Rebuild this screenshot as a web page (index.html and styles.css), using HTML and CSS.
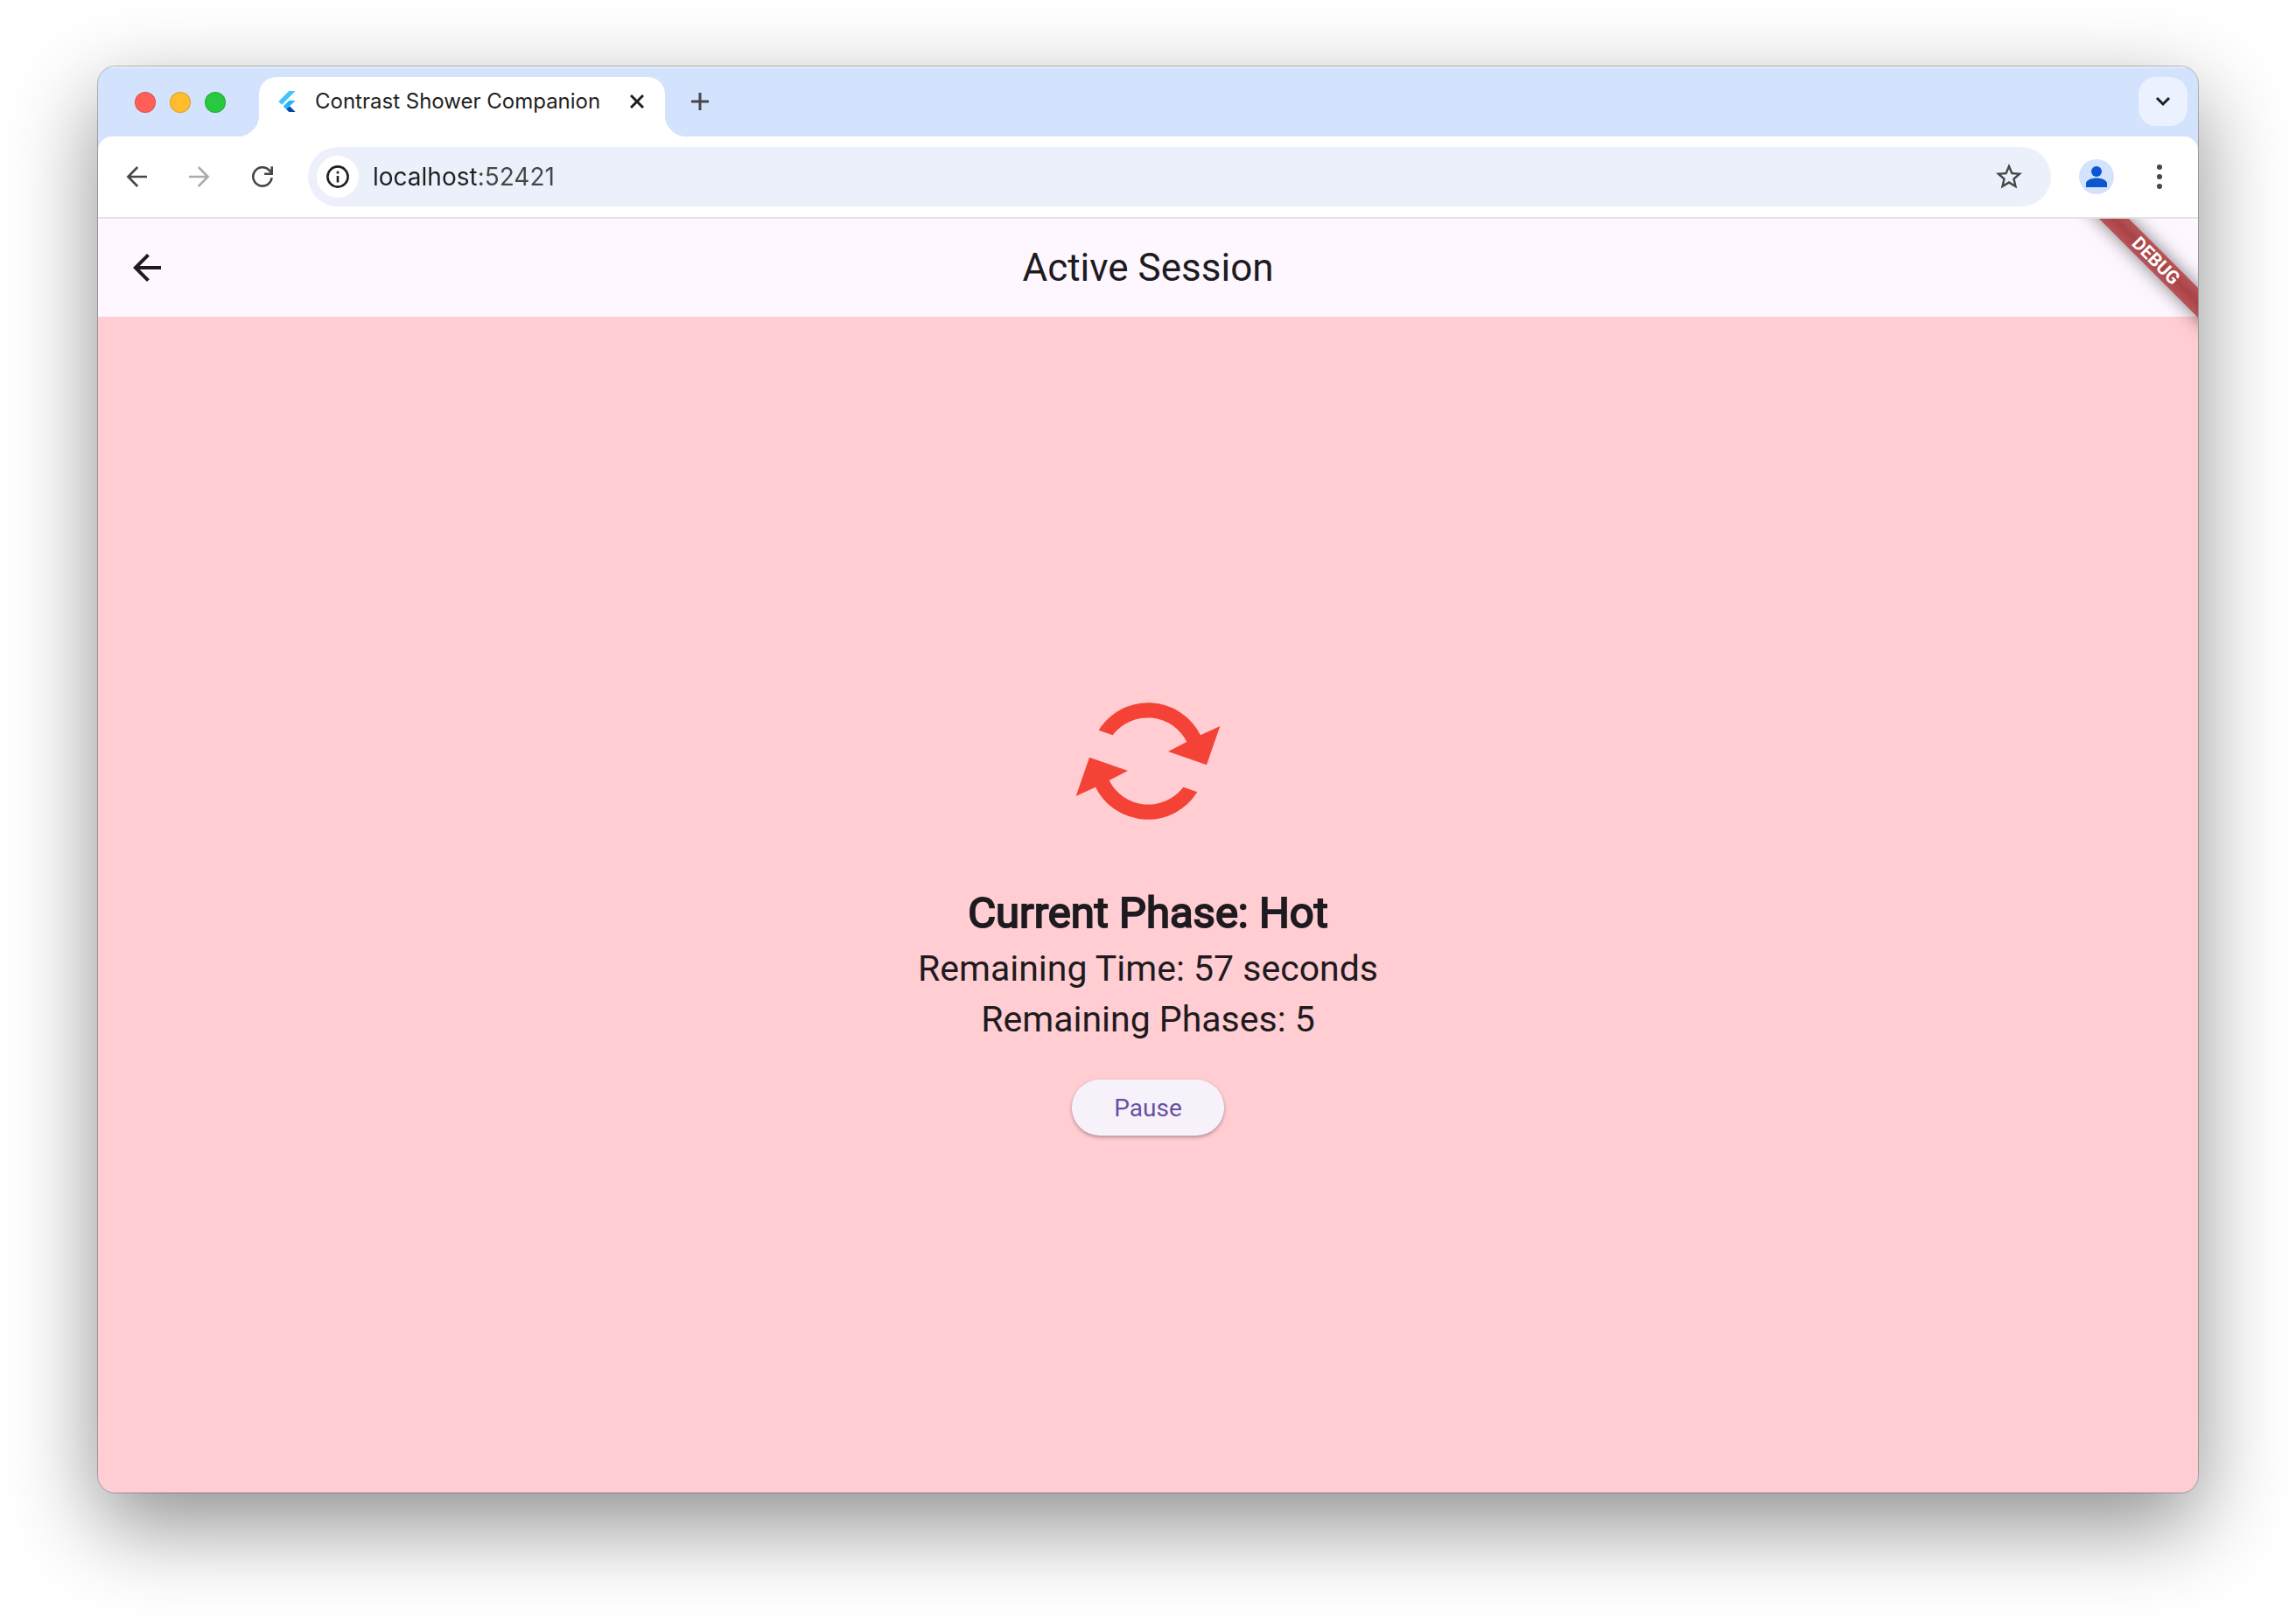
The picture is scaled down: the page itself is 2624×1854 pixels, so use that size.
FILE: index.html
```html
<!DOCTYPE html>
<html lang="en">
<head>
  <meta charset="utf-8">
  <meta name="viewport" content="width=device-width, initial-scale=1">
  <title>Contrast Shower Companion</title>
  <link rel="stylesheet" href="styles.css">
</head>
<body>
  <div class="window">
    <header class="tab-strip">
      <div class="lights">
        <button class="light light-close" aria-label="Close window"></button>
        <button class="light light-minimize" aria-label="Minimize window"></button>
        <button class="light light-zoom" aria-label="Zoom window"></button>
      </div>
      <span class="flare flare-left"></span>
      <div class="tab">
        <svg class="favicon" viewBox="0 0 24 24" aria-hidden="true">
          <path fill="#42c3fb" d="M14.3 0 2.3 12 6 15.7 21.7 0z"/>
          <path fill="#1fb4fa" d="M14.3 11.1 7.9 17.5l3.3 3.3 10.5-9.7z"/>
          <path fill="#0d47a1" d="m11.1 20.8 3.2 3.2h7.4l-6.5-6.5z"/>
          <path fill="#29b6f6" d="m7.9 17.5 3.6-3.6 3.7 3.6-4 3.3z"/>
        </svg>
        <span class="tab-title">Contrast Shower Companion</span>
        <button class="tab-close" aria-label="Close tab">
          <svg width="16" height="16" viewBox="0 0 16 16" fill="none" stroke="#1f1f1f" stroke-width="3"><path d="m1 1 14 14M15 1 1 15"/></svg>
        </button>
      </div>
      <span class="flare flare-right"></span>
      <button class="new-tab" aria-label="New tab">
        <svg width="20" height="20" viewBox="0 0 20 20" fill="none" stroke="#474747" stroke-width="3"><path d="M10 0v20M0 10h20"/></svg>
      </button>
      <button class="tab-search" aria-label="Search tabs">
        <svg width="18" height="12" viewBox="0 0 18 12" fill="none" stroke="#1f1f1f" stroke-width="3"><path d="m2 2 7 7 7-7"/></svg>
      </button>
    </header>

    <nav class="toolbar" aria-label="Browser">
      <button class="tool" aria-label="Back">
        <svg width="24" height="24" viewBox="0 0 24 24" fill="none" stroke="#474747" stroke-width="2.6"><path d="M24 12H3M13.2 1 2.4 12l10.8 11"/></svg>
      </button>
      <button class="tool" aria-label="Forward" disabled>
        <svg width="24" height="24" viewBox="0 0 24 24" fill="none" stroke="#ababab" stroke-width="2.6"><path d="M0 12h21M10.8 1l10.8 11-10.8 11"/></svg>
      </button>
      <button class="tool" aria-label="Reload">
        <svg width="24" height="24" viewBox="0 0 24 24" fill="none" stroke="#474747" stroke-width="2.6"><path d="M22.6 13.2A10.7 10.7 0 1 1 19.8 4.6L22.6 8M22.7.3v8.4h-8.6"/></svg>
      </button>
      <div class="omnibox">
        <button class="site-info" aria-label="View site information">
          <svg width="26" height="26" viewBox="0 0 26 26" fill="none" stroke="#1f1f1f" stroke-width="2.6"><circle cx="13" cy="13" r="11.6"/><path d="M13 12v7.4M13 6.8v2.8"/></svg>
        </button>
        <input class="address" type="text" value="localhost:52421" aria-label="Address">
        <button class="bookmark" aria-label="Bookmark this tab">
          <svg width="36" height="36" viewBox="0 0 24 24" fill="#474747"><path d="m22 9.24-7.19-.62L12 2 9.19 8.63 2 9.24l5.46 4.73L5.82 21 12 17.27 18.18 21l-1.63-7.03zM12 15.4l-3.76 2.27 1-4.28-3.32-2.88 4.38-.38L12 6.1l1.71 4.04 4.38.38-3.32 2.88 1 4.28z"/></svg>
        </button>
      </div>
      <button class="tool" aria-label="Profile">
        <svg width="40" height="40" viewBox="0 0 40 40"><circle cx="20" cy="20" r="20" fill="#d3e3fd"/><g fill="#0b57d0"><circle cx="20" cy="14" r="6"/><path d="M20 21.4c-5 0-12 2-12 6.2V32h24v-4.400c0-4.200-7-6.200-12-6.200z"/></g></svg>
      </button>
      <button class="tool" aria-label="Menu">
        <svg width="6" height="28" viewBox="0 0 6 28" fill="#474747"><circle cx="3" cy="3" r="3"/><circle cx="3" cy="14" r="3"/><circle cx="3" cy="25" r="3"/></svg>
      </button>
    </nav>

    <div class="app">
      <header class="app-bar">
        <button class="app-back" aria-label="Back">
          <svg width="48" height="48" viewBox="0 0 24 24" fill="#1d1b20"><path d="M20 11H7.830l5.590-5.590L12 4l-8 8 8 8 1.410-1.410L7.830 13H20z"/></svg>
        </button>
        <h1 class="app-title">Active Session</h1>
      </header>
      <main class="session">
        <svg class="phase-icon" viewBox="36 -30 600 600" fill="#f44336" aria-hidden="true">
          <path d="M167 164A200 200 0 0 1 516 181L583 150 537 283 405 237 469 204A150 150 0 0 0 215 181z"/>
          <path transform="rotate(180 336 270)" d="M167 164A200 200 0 0 1 516 181L583 150 537 283 405 237 469 204A150 150 0 0 0 215 181z"/>
        </svg>
        <h2 class="phase">Current Phase: Hot</h2>
        <p class="detail">Remaining Time: 57 seconds</p>
        <p class="detail">Remaining Phases: 5</p>
        <button class="pause">Pause</button>
      </main>
      <div class="banner">DEBUG</div>
    </div>
  </div>
</body>
</html>
```

FILE: styles.css
```css
* {
  box-sizing: border-box;
}

body {
  display: flex;
  min-height: 100vh;
  margin: 0;
  padding: 76px 112px 148px;
  background: #fff;
  font-family: Roboto, "Liberation Sans", sans-serif;
}

h1,
h2,
p {
  margin: 0;
  font-weight: 400;
}

button {
  display: grid;
  place-items: center;
  flex: none;
  padding: 0;
  border: 0;
  background: none;
  font: inherit;
}

svg {
  display: block;
}

.window {
  display: flex;
  flex: 1;
  flex-direction: column;
  min-width: 0;
  overflow: hidden;
  border-radius: 20px;
  background: #d3e3fd;
  box-shadow: 0 0 0 1px rgba(0, 0, 0, 0.24), 0 36px 100px rgba(0, 0, 0, 0.45);
}

/* Tab strip */

.tab-strip {
  display: flex;
  align-items: flex-start;
  height: 80px;
  padding: 12px 12px 0 42px;
  box-shadow: inset 0 2px 0 #e4eefe;
  font-family: Inter, "Liberation Sans", sans-serif;
}

.lights {
  display: flex;
  align-items: center;
  gap: 16px;
  height: 58px;
  margin-right: 14px;
}

.light {
  width: 24px;
  height: 24px;
  border: 1px solid rgba(0, 0, 0, 0.14);
  border-radius: 50%;
}

.light-close {
  background: #ff5f57;
}

.light-minimize {
  background: #febc2e;
}

.light-zoom {
  background: #28c840;
}

.flare {
  align-self: flex-end;
  width: 24px;
  height: 24px;
}

.flare-left {
  background: radial-gradient(circle at 0 0, transparent 24px, #fff 24px);
}

.flare-right {
  background: radial-gradient(circle at 100% 0, transparent 24px, #fff 24px);
}

.tab {
  display: flex;
  align-items: center;
  width: 464px;
  height: 68px;
  padding: 0 16px 12px 20px;
  border-radius: 20px 20px 0 0;
  background: #fff;
}

.favicon {
  width: 24px;
  height: 24px;
  margin-right: 20px;
}

.tab-title {
  flex: 1;
  overflow: hidden;
  color: #1f1f1f;
  font-size: 24px;
  line-height: 32px;
  white-space: nowrap;
}

.tab-close {
  width: 32px;
  height: 32px;
}

.new-tab {
  width: 32px;
  height: 56px;
}

.tab-search {
  width: 56px;
  height: 56px;
  margin-left: auto;
  border-radius: 20px;
  background: #ebf1fe;
}

/* Toolbar */

.toolbar {
  display: flex;
  align-items: center;
  gap: 16px;
  padding: 12px 16px;
  border-bottom: 2px solid #e1e3e1;
  border-radius: 16px 16px 0 0;
  background: #fff;
}

.tool {
  width: 56px;
  height: 56px;
}

.omnibox {
  display: flex;
  flex: 1;
  align-items: center;
  height: 68px;
  margin: 0 8px;
  padding: 0 30px 0 10px;
  border-radius: 34px;
  background: #ecf0fa;
}

.site-info {
  width: 48px;
  height: 48px;
  border-radius: 50%;
  background: #fff;
}

.address {
  flex: 1;
  min-width: 0;
  height: 48px;
  padding: 0 0 0 16px;
  border: 0;
  outline: 0;
  background: linear-gradient(90deg, #1f1f1f 134px, #474747 134px);
  background-clip: text;
  -webkit-background-clip: text;
  color: transparent;
  font-family: Inter, "Liberation Sans", sans-serif;
  font-size: 28px;
}

/* Application */

.app {
  position: relative;
  display: flex;
  flex: 1;
  flex-direction: column;
  overflow: hidden;
  background: #ffcdd2;
  color: #1d1b20;
}

.app-bar {
  display: grid;
  grid-template-columns: 48px 1fr 48px;
  align-items: center;
  height: 112px;
  padding: 0 32px;
  background: #fef7ff;
}

.app-title {
  font-size: 44px;
  line-height: 56px;
  text-align: center;
}

.session {
  display: flex;
  flex: 1;
  flex-direction: column;
  align-items: center;
  justify-content: center;
}

.phase-icon {
  width: 200px;
  height: 200px;
  margin-bottom: 40px;
}

.phase {
  font-size: 49px;
  line-height: 68px;
  -webkit-text-stroke: 2px #1d1b20;
}

.detail {
  font-size: 41px;
  line-height: 58px;
}

.pause {
  height: 64px;
  margin-top: 40px;
  padding: 0 48px;
  border-radius: 32px;
  background: #f7f2fa;
  box-shadow: 0 2px 4px rgba(0, 0, 0, 0.3);
  color: #6750a4;
  font-size: 28px;
}

.banner {
  position: absolute;
  top: 36px;
  right: -52px;
  width: 200px;
  transform: rotate(45deg);
  background: linear-gradient(#b85457, #a84447 50%, #b85457);
  box-shadow: 0 0 20px rgba(0, 0, 0, 0.5);
  color: #fff;
  font-size: 21px;
  font-weight: 700;
  line-height: 24px;
  text-align: center;
}
```
